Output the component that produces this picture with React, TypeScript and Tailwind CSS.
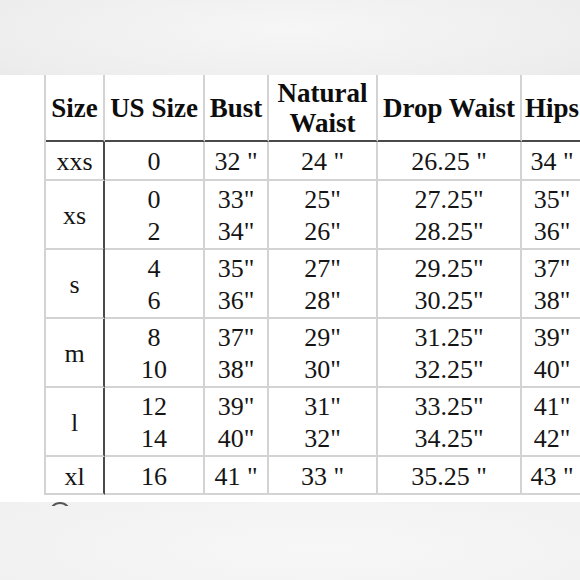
import React from "react";

type Row = { size: string; h: string; cols: string[][] };

const rows: Row[] = [
  { size: "xxs", h: "h-[39px]", cols: [["0"], ['32 "'], ['24 "'], ['26.25 "'], ['34 "']] },
  { size: "xs", h: "h-[68px]", cols: [["0", "2"], ['33"', '34"'], ['25"', '26"'], ['27.25"', '28.25"'], ['35"', '36"']] },
  { size: "s", h: "h-[70px]", cols: [["4", "6"], ['35"', '36"'], ['27"', '28"'], ['29.25"', '30.25"'], ['37"', '38"']] },
  { size: "m", h: "h-[69px]", cols: [["8", "10"], ['37"', '38"'], ['29"', '30"'], ['31.25"', '32.25"'], ['39"', '40"']] },
  { size: "l", h: "h-[69px]", cols: [["12", "14"], ['39"', '40"'], ['31"', '32"'], ['33.25"', '34.25"'], ['41"', '42"']] },
  { size: "xl", h: "h-[38px]", cols: [["16"], ['41 "'], ['33 "'], ['35.25 "'], ['43 "']] },
];

const grid = "grid grid-cols-[59px_100px_64px_109px_144px_62px]";
const cell = "flex flex-col items-center justify-center border-r-2 border-b-2 border-[#d3d3d3]";

export default function App() {
  return (
    <div
      className="w-[580px] h-[580px] overflow-hidden flex flex-col bg-white text-[#151515]"
      style={{ fontFamily: '"Liberation Serif", "Times New Roman", serif' }}
    >
      <div className="h-[75px] shrink-0 bg-[radial-gradient(ellipse_80%_120%_at_50%_40%,#f6f6f6,#ededed_70%,#e4e4e4)]" />
      <div className="h-[427px] shrink-0 bg-white overflow-hidden">
        <div className="ml-[44px] w-[540px] border-l-2 border-[#d3d3d3]">
          <div className={`${grid} h-[67px] text-[27px] font-bold leading-[30px] text-[#0d0d0d]`}>
            <div className={`${cell} !border-b-[#4a4a4a]`}>Size</div>
            <div className={`${cell} !border-b-[#4a4a4a] whitespace-nowrap`}>US Size</div>
            <div className={`${cell} !border-b-[#4a4a4a]`}>Bust</div>
            <div className={`${cell} !border-b-[#4a4a4a] text-center`}>
              <span>Natural</span>
              <span>Waist</span>
            </div>
            <div className={`${cell} !border-b-[#4a4a4a] whitespace-nowrap`}>Drop Waist</div>
            <div className={`${cell} !border-b-[#4a4a4a]`}>Hips</div>
          </div>
          {rows.map((r) => (
            <div key={r.size} className={`${grid} ${r.h} text-[26px] leading-[32px]`}>
              <div className={`${cell} pt-[3px] !border-r-[#4a4a4a]`}>{r.size}</div>
              {r.cols.map((c, i) => (
                <div key={i} className={`${cell} pt-[3px] whitespace-pre`}>
                  {c.map((v, j) => (
                    <span key={j}>{v}</span>
                  ))}
                </div>
              ))}
            </div>
          ))}
        </div>
      </div>
      <div className="flex-1 bg-[radial-gradient(ellipse_90%_140%_at_55%_60%,#f7f7f7,#f1f1f1_70%,#e9e9e9)]">
        <div className="ml-[49px] w-[22px] h-[4px] overflow-hidden">
          <div className="w-[22px] h-[22px] rounded-full border-2 border-[#555]" />
        </div>
      </div>
    </div>
  );
}
